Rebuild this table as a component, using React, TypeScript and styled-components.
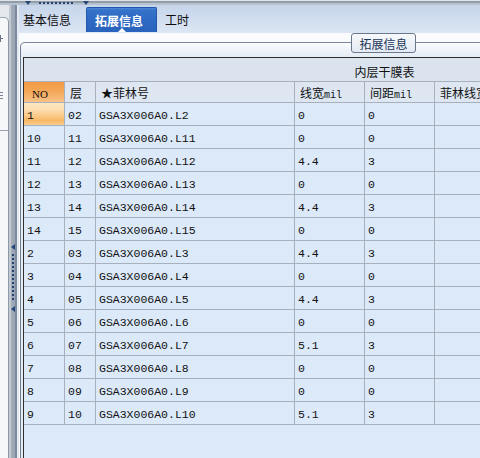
import React from 'react';
import styled, { createGlobalStyle, css } from 'styled-components';

const GlobalStyle = createGlobalStyle`
  * { box-sizing: border-box; }
  html, body { margin: 0; padding: 0; }
  body {
    width: 480px; height: 458px; overflow: hidden; background: #f7f9fc;
    font-family: "Noto Sans CJK SC", "Liberation Sans", sans-serif;
  }
`;

const COLS = '41px 31px 199px 70px 70px 70px 120px 120px';
const GRID = '#a7b0bc';
const MONO = '"Liberation Mono", "Noto Sans CJK SC", monospace';

const Window = styled.div`
  width: 480px; height: 458px;
  display: flex; flex-direction: column; overflow: hidden;
`;

const TopBar = styled.div`
  height: 5px; flex: none;
  background: linear-gradient(#dfe2e6 0, #dfe2e6 1px, #929daa 1px, #929daa 3px, #b7c2d0 3px);
  display: flex; align-items: flex-end; padding-left: 25px;
`;

const DownArrow = styled.div`
  width: 0; height: 0; flex: none;
  border-left: 3px solid transparent; border-right: 3px solid transparent;
  border-top: 4px solid #27467a;
`;

const HDots = styled.div`
  width: 34px; height: 2px; margin: 0 10px 1px 8px; flex: none;
  background: repeating-linear-gradient(90deg, #24406e 0 2px, transparent 2px 4px);
`;

const Body = styled.div`
  flex: 1; display: flex; min-height: 0;
`;

const LeftPanel = styled.div`
  width: 9px; flex: none; background: #e4e8ec;
  padding-top: 12px; display: flex; flex-direction: column; overflow: hidden;
`;

const LeftInner = styled.div`
  flex: 1; background: #f6f7f8;
  border-top: 1px solid #9aa4b1; border-right: 1px solid #8f9aa8;
  border-top-right-radius: 5px;
  display: flex; flex-direction: column;
`;

const PlusMark = styled.div`
  position: relative; width: 3px; height: 7px; margin-top: 17px;
  &::before {
    content: ''; position: absolute; left: 0; top: 3px; width: 3px; height: 1px; background: #6a7484;
  }
  &::after {
    content: ''; position: absolute; left: 0; top: 0; width: 1px; height: 7px; background: #6a7484;
  }
`;

const LinesMark = styled.div`
  width: 3px; height: 7px; margin-top: 50px;
  background: repeating-linear-gradient(180deg, #7a8494 0 1px, transparent 1px 3px);
`;

const LeftRule = styled.div`
  margin-top: 31px; height: 1px; background: #9aa4b1;
`;

const Splitter = styled.div`
  width: 10px; flex: none;
  background: linear-gradient(90deg, #c3c9d0 0, #c3c9d0 2px, #a4aebb 2px, #98a3b2 6px, #7d8a9f 6px, #7d8a9f 8px, #e3e9f1 8px);
  display: flex; flex-direction: column; align-items: flex-start; padding: 239px 0 0 2px;
`;

const LeftArrow = styled.div`
  width: 0; height: 0; flex: none;
  border-top: 3px solid transparent; border-bottom: 3px solid transparent;
  border-right: 4px solid #27467a;
`;

const VDots = styled.div`
  width: 2px; height: 46px; margin: 4px 0 6px 1px; flex: none;
  background: repeating-linear-gradient(180deg, #24406e 0 2px, transparent 2px 4px);
`;

const Main = styled.div`
  flex: 1; min-width: 0; display: flex; flex-direction: column; background: #fafbfd;
`;

const TabBar = styled.div`
  height: 28px; flex: none;
  background: linear-gradient(#c6d5ea, #d3dff0 60%, #dce6f3);
  display: flex; align-items: flex-end; padding-bottom: 1px;
`;

const Tab = styled.div<{ $active?: boolean }>`
  position: relative; height: 25px; display: flex; align-items: center;
  font-size: 12px; color: #0c0c0c; white-space: nowrap;
  padding: 0 15px 0 4px;
  ${p => p.$active && css`
    padding: 0 13px 0 8px;
    color: #ffffff; font-weight: bold;
    background: linear-gradient(#4f88d6 0, #3572c9 2px, #2d68c2 60%, #2a63bc);
    border: 1px solid #2256a8; border-bottom: none;
    border-radius: 2px 2px 0 0;
    &::after {
      content: ''; position: absolute; left: 50%; bottom: 0; margin-left: -4px;
      border-left: 4px solid transparent; border-right: 4px solid transparent;
      border-bottom: 4px solid #ffffff;
    }
  `}
  ${p => !p.$active && css`
    & + & { padding-left: 8px; }
  `}
`;

const GroupBox = styled.div`
  position: relative; flex: 1; min-height: 0;
  margin: 9px 0 0 1px;
  border-top: 1px solid #7c899d; border-left: 1px solid #6c7a90;
  border-top-left-radius: 5px;
  background: linear-gradient(#fbfcfe, #e6edf6 13px, #e6edf6);
  padding: 14px 0 0 2px;
  display: flex; flex-direction: column;
`;

const GroupTitle = styled.div`
  position: absolute; left: 330px; top: -10px;
  width: 65px; height: 20px;
  border: 1px solid #6b788c; border-radius: 3px;
  background: linear-gradient(#f7f9fc, #e3eaf3);
  display: flex; align-items: center; justify-content: center;
  font-size: 12px; color: #23375a;
`;

const Table = styled.div`
  flex: 1; width: 722px;
  border-top: 1px solid #2e2e2e; border-left: 1px solid #2e2e2e;
  background: #dce9f9;
  display: flex; flex-direction: column;
`;

const TitleRow = styled.div`
  height: 24px; flex: none;
  border-bottom: 1px solid ${GRID};
  background: #dae3ee;
  display: flex; align-items: center; justify-content: center;
  padding-top: 3px; font-size: 12px; color: #111;
`;

const HeaderRow = styled.div`
  display: grid; grid-template-columns: ${COLS}; height: 21px; flex: none;
`;

const HeaderCell = styled.div<{ $orange?: boolean }>`
  border-right: 1px solid ${GRID}; border-bottom: 1px solid ${GRID};
  background: #dde6f1;
  padding: 2px 0 0 5px; line-height: 18px;
  font-size: 12px; color: #111; white-space: nowrap; overflow: hidden;
  ${p => p.$orange && css`
    padding-left: 8px;
    background: linear-gradient(180deg, #f29a45 0%, #f4a656 45%, #f8c287 100%);
  `}
`;

const Mil = styled.span`
  font-family: ${MONO}; font-size: 10px;
`;

const NoText = styled.span`
  font-family: "Liberation Serif", serif; font-size: 11px;
`;

const DataRow = styled.div`
  display: grid; grid-template-columns: ${COLS}; height: 23px; flex: none;
`;

const Cell = styled.div<{ $selected?: boolean }>`
  border-right: 1px solid ${GRID}; border-bottom: 1px solid ${GRID};
  display: flex; align-items: center; padding: 3px 0 0 3px;
  font-family: ${MONO}; font-size: 11.5px; color: #111; white-space: nowrap; overflow: hidden;
  ${p => p.$selected && css`
    background: linear-gradient(180deg, #fde6c2 0%, #fddfb2 30%, #fbcc8c 55%, #f7b865 80%, #f9cf93 100%);
  `}
`;

const rows: string[][] = [
  ['1', '02', 'GSA3X006A0.L2', '0', '0'],
  ['10', '11', 'GSA3X006A0.L11', '0', '0'],
  ['11', '12', 'GSA3X006A0.L12', '4.4', '3'],
  ['12', '13', 'GSA3X006A0.L13', '0', '0'],
  ['13', '14', 'GSA3X006A0.L14', '4.4', '3'],
  ['14', '15', 'GSA3X006A0.L15', '0', '0'],
  ['2', '03', 'GSA3X006A0.L3', '4.4', '3'],
  ['3', '04', 'GSA3X006A0.L4', '0', '0'],
  ['4', '05', 'GSA3X006A0.L5', '4.4', '3'],
  ['5', '06', 'GSA3X006A0.L6', '0', '0'],
  ['6', '07', 'GSA3X006A0.L7', '5.1', '3'],
  ['7', '08', 'GSA3X006A0.L8', '0', '0'],
  ['8', '09', 'GSA3X006A0.L9', '0', '0'],
  ['9', '10', 'GSA3X006A0.L10', '5.1', '3'],
];

export default function App() {
  return (
    <>
      <GlobalStyle />
      <Window>
        <TopBar>
          <DownArrow />
          <HDots />
          <DownArrow />
        </TopBar>
        <Body>
          <LeftPanel>
            <LeftInner>
              <PlusMark />
              <LinesMark />
              <LeftRule />
            </LeftInner>
          </LeftPanel>
          <Splitter>
            <LeftArrow />
            <VDots />
            <LeftArrow />
          </Splitter>
          <Main>
            <TabBar>
              <Tab>基本信息</Tab>
              <Tab $active>拓展信息</Tab>
              <Tab>工时</Tab>
            </TabBar>
            <GroupBox>
              <GroupTitle>拓展信息</GroupTitle>
              <Table>
                <TitleRow>内层干膜表</TitleRow>
                <HeaderRow>
                  <HeaderCell $orange><NoText>NO</NoText></HeaderCell>
                  <HeaderCell>层</HeaderCell>
                  <HeaderCell>★菲林号</HeaderCell>
                  <HeaderCell>线宽<Mil>mil</Mil></HeaderCell>
                  <HeaderCell>间距<Mil>mil</Mil></HeaderCell>
                  <HeaderCell>菲林线宽</HeaderCell>
                  <HeaderCell />
                  <HeaderCell />
                </HeaderRow>
                {rows.map((r, i) => (
                  <DataRow key={i}>
                    <Cell $selected={i === 0}>{r[0]}</Cell>
                    <Cell>{r[1]}</Cell>
                    <Cell>{r[2]}</Cell>
                    <Cell>{r[3]}</Cell>
                    <Cell>{r[4]}</Cell>
                    <Cell />
                    <Cell />
                    <Cell />
                  </DataRow>
                ))}
              </Table>
            </GroupBox>
          </Main>
        </Body>
      </Window>
    </>
  );
}
